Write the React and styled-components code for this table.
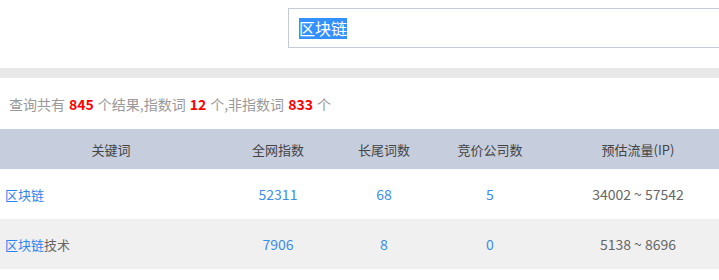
// Packages
import React from "react"
import styled, { createGlobalStyle } from "styled-components"

const GlobalStyle = createGlobalStyle`
    html, body {
        margin: 0;
        padding: 0;
        background: #fff;
        overflow: hidden;
        font-family: "Noto Sans CJK SC", "Noto Sans", sans-serif;
    }
`

// Styles
const Page = styled.div`
    width: 730px;
`

const SearchBar = styled.div`
    display: flex;
    padding: 8px 0 0 288px;
    height: 68px;
    box-sizing: border-box;
`

const SearchBox = styled.div`
    width: 460px;
    height: 40px;
    box-sizing: border-box;
    border: 1px solid #c5ccd8;
    display: flex;
    align-items: center;
    padding-left: 10px;
`

const Selected = styled.span`
    background: #3390ff;
    color: #fff;
    font-size: 16px;
    line-height: 21px;
`

const Divider = styled.div`
    height: 10px;
    background: #e8e8e8;
`

const Summary = styled.div`
    height: 51px;
    display: flex;
    align-items: center;
    padding-left: 9px;
    font-size: 14px;
    color: #999;
`

const Count = styled.b`
    color: #f00;
    font-weight: bold;
    margin: 0 4px;
`

const Table = styled.div`
    display: grid;
    grid-template-columns: 222px 112px 100px 112px 184px;
`

const Head = styled.div`
    height: 40px;
    background: #c6cddc;
    color: #444;
    font-size: 13px;
    display: flex;
    align-items: center;
    justify-content: center;
`

const Cell = styled.div`
    height: 50px;
    background: ${(p) => (p.$alt ? "#f0f0f0" : "#fff")};
    color: ${(p) => (p.$muted ? "#666" : "#3a8ee6")};
    font-size: ${(p) => (p.$left ? "13px" : "14px")};
    display: flex;
    align-items: center;
    justify-content: ${(p) => (p.$left ? "flex-start" : "center")};
    padding-left: ${(p) => (p.$left ? "5px" : "0")};
    white-space: pre;
`

const Link = styled.span`
    color: #2b85f0;
`

const Rest = styled.span`
    color: #666;
`

const headers = ["关键词", "全网指数", "长尾词数", "竞价公司数", "预估流量(IP)"]

const rows = [
    { word: "区块链", rest: "", index: 52311, tail: 68, bid: 5, ip: "34002 ~ 57542" },
    { word: "区块链", rest: "技术", index: 7906, tail: 8, bid: 0, ip: "5138 ~ 8696" },
]

export default function App() {
    return (
        <>
            <GlobalStyle />
            <Page>
                <SearchBar>
                    <SearchBox>
                        <Selected>区块链</Selected>
                    </SearchBox>
                </SearchBar>

                <Divider />

                <Summary>
                    查询共有<Count>845</Count>个结果,指数词<Count>12</Count>个,非指数词
                    <Count>833</Count>个
                </Summary>

                <Table>
                    {headers.map((h) => (
                        <Head key={h}>{h}</Head>
                    ))}
                    {rows.map((r, i) => (
                        <React.Fragment key={i}>
                            <Cell $left $alt={i % 2 === 1}>
                                <Link>{r.word}</Link>
                                <Rest>{r.rest}</Rest>
                            </Cell>
                            <Cell $alt={i % 2 === 1}>{r.index}</Cell>
                            <Cell $alt={i % 2 === 1}>{r.tail}</Cell>
                            <Cell $alt={i % 2 === 1}>{r.bid}</Cell>
                            <Cell $alt={i % 2 === 1} $muted>
                                {r.ip}
                            </Cell>
                        </React.Fragment>
                    ))}
                </Table>
            </Page>
        </>
    )
}
